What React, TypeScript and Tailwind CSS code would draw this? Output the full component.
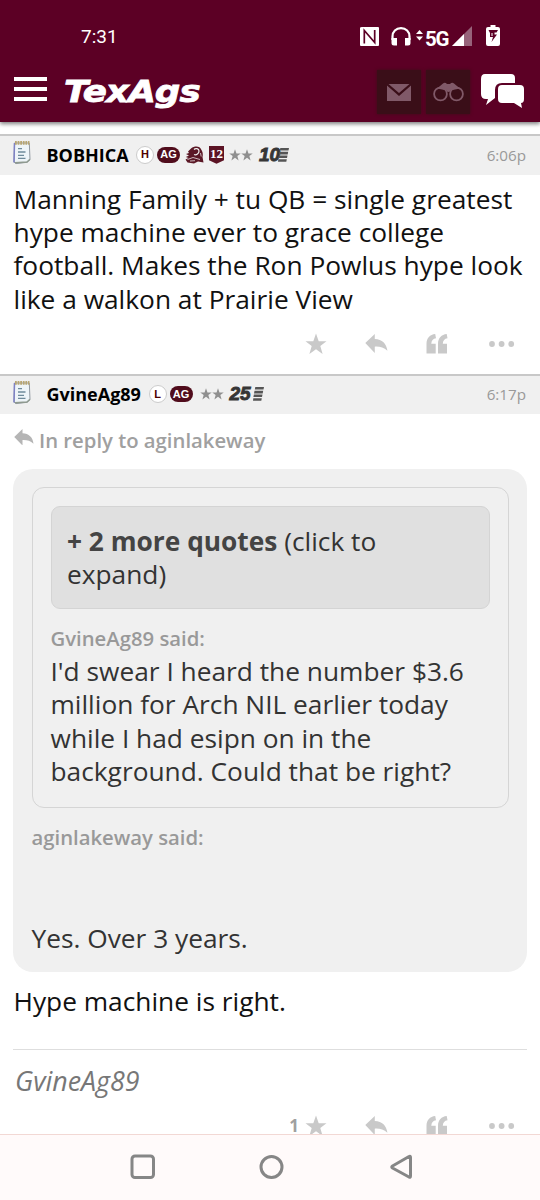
import React from "react";

const sans = "font-['Open_Sans','Noto_Sans',sans-serif]";

function Star({ size, className = "" }: { size: number; className?: string }) {
  return (
    <svg width={size} height={size} viewBox="0 0 22 22" className={className} fill="currentColor">
      <path d="M11 0.5 13.7 8.3H21.5L15.3 13 17.6 21 11 16.2 4.4 21 6.7 13 0.5 8.3H8.3Z" />
    </svg>
  );
}

function Reply({ w }: { w: number }) {
  return (
    <svg width={w} height={(w * 20) / 24} viewBox="0 0 24 20" fill="currentColor" className="shrink-0">
      <path d="M0.3 9.5 10.2 0V5.2C18 5.6 22.4 10 23.4 17.6 19.5 13.8 15.5 13 10.2 13.2V19.8Z" />
    </svg>
  );
}

function Quote() {
  return (
    <svg width="22" height="20" viewBox="0 0 22 20" fill="currentColor">
      <path d="M9.2 0 10 4.2C7 4.7 5.5 6.5 5.3 9.7H9.7V19.5H0.5V10C0.5 4 4 .5 9.2 0ZM20.7 0 21.5 4.2C18.5 4.7 17 6.5 16.8 9.7H21V19.5H12V10C12 4 15.5 .5 20.7 0Z" />
    </svg>
  );
}

function Dots() {
  return (
    <svg width="26" height="6" viewBox="0 0 26 6" fill="currentColor">
      <circle cx="3" cy="3" r="2.9" /><circle cx="12.6" cy="3" r="2.9" /><circle cx="22.2" cy="3" r="2.9" />
    </svg>
  );
}

function Actions({ count }: { count?: string }) {
  return (
    <div className="flex h-[22px] items-center text-[#c9c9c9]">
      <span className="w-[305px] pr-[6px] text-right text-[17px] font-bold leading-[12px] text-[#a0a0a0]">{count}</span>
      <Star size={22} />
      <span className="ml-[38px]"><Reply w={23} /></span>
      <span className="ml-[38px]"><Quote /></span>
      <span className="ml-[41px]"><Dots /></span>
    </div>
  );
}

function Notepad() {
  return (
    <svg width="19" height="25" viewBox="0 0 19 25">
      <path d="M1.5 3H16.3L17 19.5 14 22.3 3 23.6 1 22Z" fill="#eef4f8" stroke="#929aa2" />
      <path d="M1.5 3 1 22.5" stroke="#7d81c4" strokeWidth="1.5" />
      <path d="M2 22.8 14 22 17 19.2" stroke="#8f9a8f" strokeWidth="1.5" fill="none" />
      <path d="M2 2.8H16.5" stroke="#b8a674" strokeWidth="3.8" strokeDasharray="1.8 0.8" />
      <path d="M5 8.6h4M5 12h7.5M5 15.3h6M5 18.3h7.5" stroke="#6f8b9b" strokeWidth="1.3" />
    </svg>
  );
}

function YearMark({ years, width }: { years: string; width: string }) {
  return (
    <span className="flex items-center text-[#363636]">
      <span className={`${width} inline-block whitespace-nowrap font-['Liberation_Sans',sans-serif] text-[19px] font-bold italic leading-[18px] [-webkit-text-stroke:0.9px_#363636]`}>{years}</span>
      <svg width="11" height="14" viewBox="0 0 11 14" fill="#555"><path d="M2.3 0H11L10.5 2.6H1.8ZM1.5 3.8H10.2L9.7 6.4H1ZM.9 7.5H9.5L9 10H.4ZM.3 11.2H8.8L8.3 13.8H0Z" /></svg>
    </span>
  );
}

function PostBar({ name, nameW, letter, years, yearsW, time, crests }: { name: string; nameW: string; letter: string; years: string; yearsW: string; time: string; crests?: boolean }) {
  return (
    <div className="flex h-[40.5px] items-center border-t-2 border-[#c8c8c8] bg-[#f0f0f0] pb-[1px] pl-[13px] pr-[14px]">
      <span className="-mt-[4px] w-[33.5px]"><Notepad /></span>
      <span className={`${nameW} whitespace-nowrap text-[18px] font-bold leading-[24px] text-black`}>{name}</span>
      <span className="flex size-[18px] items-center justify-center rounded-full border border-[#ccc] bg-white font-['Liberation_Sans',sans-serif] text-[11px] font-bold leading-none text-[#500000]">{letter}</span>
      <span className="ml-[3px] flex h-[16px] w-[23px] items-center justify-center rounded-full bg-[#500c1c] font-['Liberation_Sans',sans-serif] text-[11px] font-bold leading-none text-white">AG</span>
      {crests && (
        <>
          <svg className="ml-[5px]" width="19" height="18" viewBox="0 0 19 18">
            <path d="M6 2.5C10-.5 15 0 16.5 4 18 6.500 18 9 17.500 11L18.500 16.500 13 15.500 9 17.500 2.500 16.500 0.500 13.500 3.500 12 0.800 11 4 9.500 1 8 4 7 3 5.500Z" fill="#5a1725" />
            <path d="M9 3.500C10.500 1.800 14 2.500 14 5S11.500 9.500 9 8.500" fill="none" stroke="#eee" strokeWidth="1.200" />
            <path d="M2.500 13.500 8 11.500 15 13.500M5 15 10 14.700M15.500 7 16.200 10.500" fill="none" stroke="#d8c8cc" strokeWidth="0.900" />
          </svg>
          <span className="ml-[5px] flex h-[18px] w-[15px] justify-center bg-[#5c1425] pt-[1px] font-['Liberation_Serif',serif] text-[13px] font-bold leading-[13px] text-white [clip-path:polygon(0_0,100%_0,100%_80%,50%_100%,0_80%)]">12</span>
        </>
      )}
      <span className={`${crests ? "ml-[5px]" : "ml-[7px]"} mr-[6px] flex gap-[0px] text-[#8f8f8f]`}><Star size={12} /><Star size={12} /></span>
      <YearMark years={years} width={yearsW} />
      <span className="ml-auto text-[15.2px] leading-[24px] text-[#999]">{time}</span>
    </div>
  );
}

export default function App() {
  return (
    <div className={`flex h-[1200px] w-[540px] flex-col overflow-hidden bg-white ${sans}`}>
      <header className="z-10 h-[122px] shrink-0 bg-[#5c0025] text-white shadow-[0_2px_4px_rgba(0,0,0,0.5)]">
        <div className="flex h-[70px] items-center pl-[81px] pt-[4px]">
          <span className="w-[279px] font-['Roboto',sans-serif] text-[19px] leading-[24px]">7:31</span>
          <svg width="19" height="19" viewBox="0 0 19 19" className="-mt-[2px]">
            <path d="M2 0H18Q19 0 19 1V18Q19 19 18 19H1Q0 19 0 18V1Q0 0 2 0Z" fill="white" />
            <path d="M4.300 16.500V3.500L14.700 15.500V3" fill="none" stroke="#5c0025" strokeWidth="1.700" />
          </svg>
          <svg width="20" height="19" viewBox="0 0 20 19" className="-mt-[2px] ml-[12px]">
            <path d="M1.5 13V9.5C1.5 4.5 5 1.2 10 1.2S18.5 4.5 18.5 9.5V13" fill="none" stroke="white" strokeWidth="2.2" />
            <path d="M.5 11H6V18.5H3Q.5 18.5.5 16ZM14 11H19.5V16Q19.5 18.5 17 18.5H14Z" fill="white" />
          </svg>
          <svg width="7" height="11" viewBox="0 0 7 11" className="-mt-[4px] ml-[5px]" fill="white"><path d="M3.5 0 7 4H0ZM0 6.5H7L3.5 10.5Z" /></svg>
          <span className="ml-[2px] mt-[4px] w-[25px] font-['Roboto',sans-serif] text-[20.5px] font-bold leading-[20px] tracking-[-1.2px]">5G</span>
          <svg width="20" height="20" viewBox="0 0 20 20" className="-mt-[2px] ml-[2px]"><path d="M20 0V20H0Z" fill="#97637a" /><path d="M12 8V20H0Z" fill="white" /></svg>
          <svg width="14" height="21" viewBox="0 0 14 21" className="-mt-[3px] ml-[14px]"><path d="M4.5 0H9.5V2H12Q14 2 14 4V19Q14 21 12 21H2Q0 21 0 19V4Q0 2 2 2H4.5Z" fill="white" /><path d="M2.5 5H12L10.5 7.5H8.5V9.5H11L5.5 17 7 12H4V8Z" fill="#5c0025" /><path d="M6 8v3" stroke="white" /></svg>
        </div>
        <div className="flex h-[52px] items-start pl-[14px]">
          <svg width="33" height="25" viewBox="0 0 33 25" className="mt-[7px]" fill="white"><path d="M0 0H33V4H0ZM0 10H33V14H0ZM0 20H33V24H0Z" /></svg>
          <span className="ml-[17px] mt-[2px] w-[313px]"><span className="inline-block origin-left scale-x-[1.15] whitespace-nowrap font-['DejaVu_Sans',sans-serif] text-[31px] font-bold italic leading-[38px] tracking-[-0.8px] [-webkit-text-stroke:0.8px_white]">TexAgs</span></span>
          <span className="flex size-[44px] items-center justify-center bg-[#3a0e18] shadow-[0_0_3px_#3a0e18]">
            <svg width="24" height="17" viewBox="0 0 24 17" fill="#805968"><path d="M0 1.5 12 12 24 1.5V17H0ZM1.5 0H22.5L12 9Z" /></svg>
          </span>
          <span className="ml-[5px] flex size-[44px] items-center justify-center bg-[#3a0e18] shadow-[0_0_3px_#3a0e18]">
            <svg width="31" height="20" viewBox="0 0 31 20" fill="none" stroke="#805968" strokeWidth="1.8"><circle cx="7.5" cy="12" r="6.4" /><circle cx="23.5" cy="12" r="6.4" /><path d="M4 6.5 10 1.5Q12 0 14 2H17Q19 0 21 1.5L27 6.5 17 8.5H14Z" fill="#805968" stroke="none" /><circle cx="15.5" cy="8" r="2" fill="#805968" stroke="none" /></svg>
          </span>
          <svg width="44" height="36" viewBox="0 0 44 36" className="ml-[11px] mt-[4px]" fill="white">
            <path d="M4 0H30Q34 0 34 4V9H21Q14 9 14 16V24L5 31 7 25H5Q0 25 0 20V5Q0 0 4 0Z" />
            <path d="M21 11H39Q43 11 43 15V25Q43 29 40 29L41 34 33 29H21Q17 29 17 25V15Q17 11 21 11Z" />
          </svg>
        </div>
      </header>
      <main className="h-[1012px] overflow-hidden pt-[12px]">
        <PostBar name="BOBHICA" nameW="w-[89.5px]" letter="H" years="10" yearsW="w-[19px]" time="6:06p" crests />
        <div className="px-[13.5px] pt-[8px] text-[26.3px] leading-[33.4px] text-[#111]">
          <div className="whitespace-nowrap">Manning Family + tu QB = single greatest</div>
          <div className="whitespace-nowrap">hype machine ever to grace college</div>
          <div className="whitespace-nowrap">football. Makes the Ron Powlus hype look</div>
          <div className="whitespace-nowrap">like a walkon at Prairie View</div>
        </div>
        <div className="pb-[19px] pt-[16.5px]"><Actions /></div>
        <PostBar name="GvineAg89" nameW="w-[102px]" letter="L" years="25" yearsW="w-[23px]" time="6:17p" />
        <div className="flex h-[55px] items-center gap-[5px] pb-[3px] pl-[14px] text-[20.3px] font-semibold text-[#a0a0a0]"><span className="-mt-[6px] text-[#b5b5b5]"><Reply w={20} /></span><span className="whitespace-nowrap">In reply to aginlakeway</span></div>
        <section className="mx-[13px] h-[503px] rounded-[20px] bg-[#f0f0f0] px-[18.500px] pt-[18px] text-[26.3px] leading-[33.5px] text-[#333]">
          <div className="h-[321px] rounded-[12px] border-[1.5px] border-[#d5d5d5] px-[18px] pt-[18px]">
            <div className="h-[103px] rounded-[9px] border-[1.5px] border-[#d4d4d4] bg-[#e0e0e0] px-[15.5px] pt-[17.500px]">
              <div className="whitespace-nowrap"><b className="text-[#444]">+ 2 more quotes</b> (click to</div>
              <div>expand)</div>
            </div>
            <div className="mt-[14px] text-[20.3px] font-semibold leading-[31px] text-[#999]">GvineAg89 said:</div>
            <div className="mt-[0.800px] whitespace-nowrap">I'd swear I heard the number $3.6</div>
            <div className="whitespace-nowrap">million for Arch NIL earlier today</div>
            <div className="whitespace-nowrap">while I had esipn on in the</div>
            <div className="whitespace-nowrap">background. Could that be right?</div>
          </div>
          <div className="mt-[14px] text-[20.3px] font-semibold leading-[30px] text-[#999]">aginlakeway said:</div>
          <div className="mt-[69.500px]">Yes. Over 3 years.</div>
        </section>
        <div className="pl-[13.5px] pt-[12px] text-[26.3px] leading-[34px] text-[#111]">Hype machine is right.</div>
        <div className="mx-[13px] mt-[30.5px] border-t border-[#dedede]" />
        <div className="pl-[15px] pt-[14.500px] text-[26.8px] italic leading-[34px] text-[#777]">GvineAg89</div>
        <div className="pt-[16.500px]"><Actions count="1" /></div>
      </main>
      <nav className="flex h-[66px] items-center border-t border-[#f2d8d4] bg-[#fffafa] pl-[130px]">
        <svg width="290" height="28" viewBox="0 0 290 28" className="-mt-[2px]" fill="none" stroke="#868686" strokeWidth="3"><rect x="2" y="3" width="21.5" height="21.5" rx="3" /><circle cx="141.5" cy="14" r="10.5" /><path d="M279 3.5Q280.5 2.5 280.5 4.5V23Q280.5 25 279 24L262.5 15Q261 14 262.5 13Z" strokeLinejoin="round" /></svg>
      </nav>
    </div>
  );
}
